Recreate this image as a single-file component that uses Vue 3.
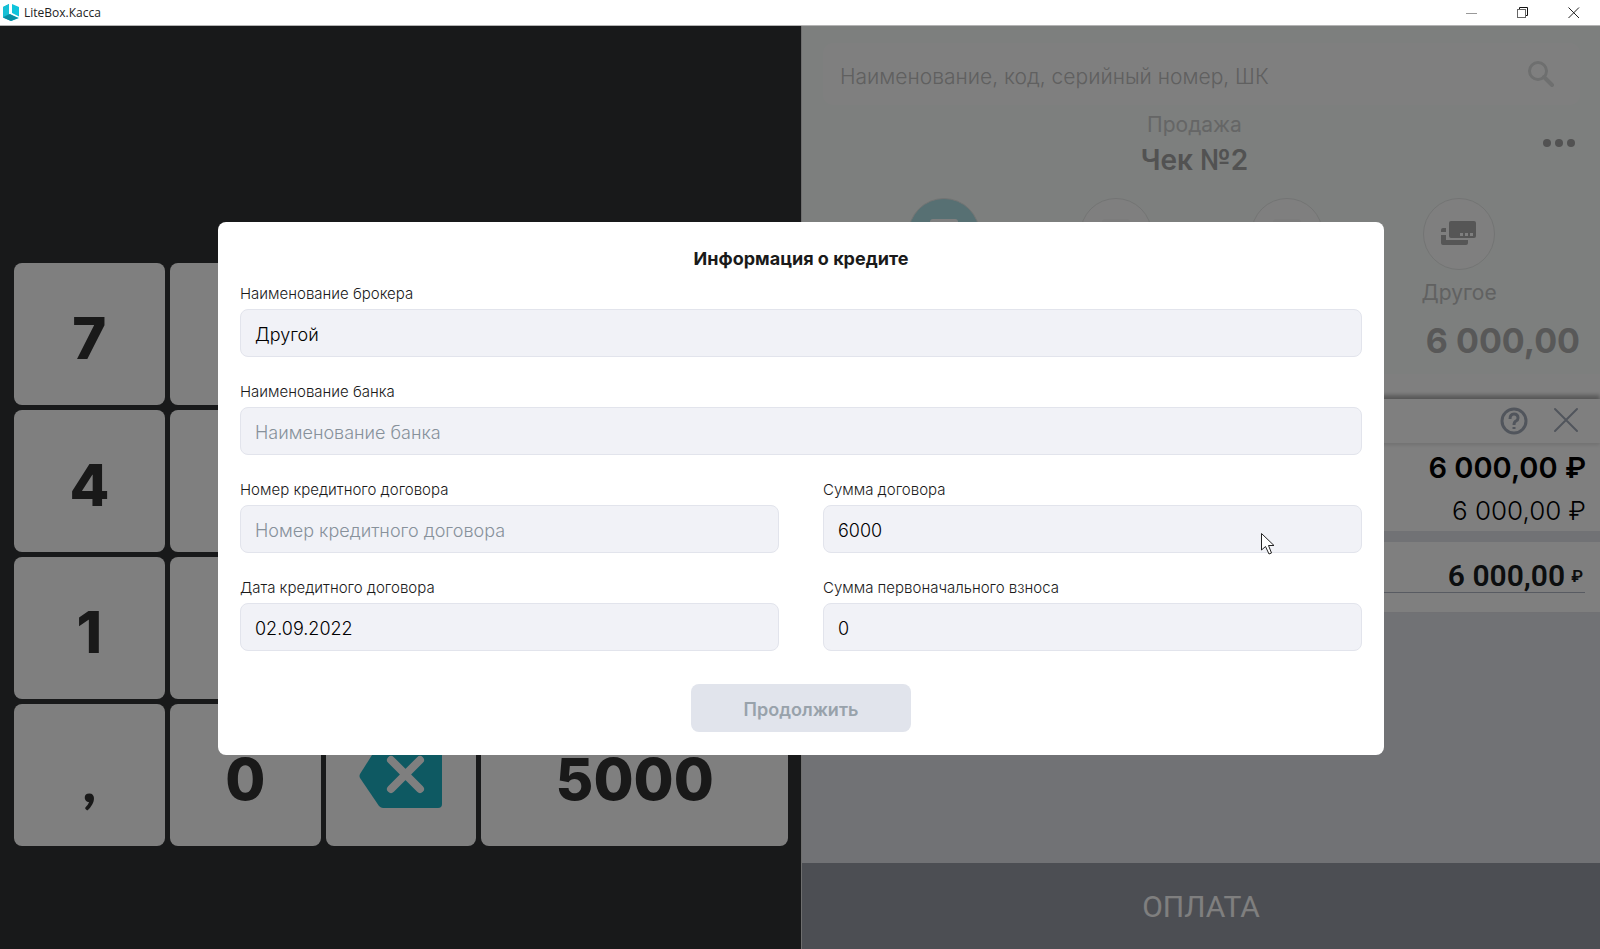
<template>
  <div class="window">
    <header class="titlebar">
      <svg class="logo" viewBox="0 0 16 17" aria-hidden="true">
        <path d="M0 3 L6 0 V10 L8 11 L16 14 L8 17 L0 13.500 Z" fill="#08aec4" />
        <path d="M0 3 L6 0 V10 L0 13 Z" fill="#16c0d6" />
        <path d="M9 0 L16 3 V12.500 L9 9 Z" fill="#10c4dc" />
        <path d="M0 13.500 L7 10 L15 14 L8 17 Z" fill="#0a8ea4" />
      </svg>
      <span class="app-name">LiteBox.Касса</span>
      <div class="window-buttons">
        <button type="button" aria-label="Свернуть">
          <svg viewBox="0 0 12 12"><path d="M0 6.500 H11" stroke="#999" /></svg>
        </button>
        <button type="button" aria-label="Развернуть">
          <svg viewBox="0 0 12 12" fill="none">
            <path d="M2.500 2.500 V0.500 H10.500 V8.500 H8.500" stroke="#111" />
            <rect x="0.500" y="2.500" width="8" height="8" stroke="#666" />
          </svg>
        </button>
        <button type="button" aria-label="Закрыть">
          <svg viewBox="0 0 12 12"><path d="M0.500 0.500 L11 11 M11 0.500 L0.500 11" stroke="#222" /></svg>
        </button>
      </div>
    </header>

    <main class="workspace">
      <section class="keypad-side">
        <div class="keypad">
          <button
            v-for="(key, index) in keys"
            :key="index"
            type="button"
            class="key"
            :class="{ wide: key.wide, comma: key.label === ',' }"
          >
            <svg v-if="key.erase" class="erase" viewBox="0 0 84 66" role="img" aria-label="Стереть">
              <path d="M24 0 H79 Q83 0 83 4 V62 Q83 66 79 66 H24 Q22 66 20 64 L1 36 Q0 34 1 32 L20 2 Q22 0 24 0 Z" fill="#1cb2c5" />
              <path d="M32 18 L61 47 M61 18 L32 47" stroke="#fff" stroke-width="8" stroke-linecap="round" />
            </svg>
            <span v-else>{{ key.label }}</span>
          </button>
        </div>
      </section>

      <section class="receipt-side">
        <div class="receipt-top">
          <div class="search">
            <input type="text" aria-label="Поиск товара" placeholder="Наименование, код, серийный номер, ШК" />
            <svg viewBox="0 0 26 26" fill="none" stroke="#dcdede" stroke-width="3">
              <circle cx="10" cy="10" r="8.500" />
              <path d="M16 16 L24 24" stroke-width="4" stroke-linecap="round" />
            </svg>
          </div>

          <div class="receipt-head">
            <div class="receipt-title">
              <p>Продажа</p>
              <h1>Чек №2</h1>
            </div>
            <button type="button" class="more" aria-label="Ещё">
              <i></i><i></i><i></i>
            </button>
          </div>

          <div class="methods">
            <button v-for="method in methods" :key="method.id" type="button" class="method">
              <span class="circle" :class="{ active: method.active }">
                <svg v-if="method.id === 'other'" viewBox="0 0 36 26" fill="#acacac">
                  <path d="M10 0 H33 Q35 0 35 2 V15 Q35 17 33 17 H10 Q8 17 8 15 V2 Q8 0 10 0 Z" />
                  <path d="M2 7 H5 V11 H0 V9 Q0 7 2 7 Z M0 14 H5 V19 H27 V22 Q27 24 25 24 H2 Q0 24 0 22 Z" />
                  <path d="M19 12 h3 v3 h-3 Z M24 12 h3 v3 h-3 Z M29 12 h3 v3 h-3 Z" fill="#fff" />
                </svg>
                <svg v-else viewBox="0 0 28 30">
                  <rect width="28" height="30" rx="3" :fill="method.active ? '#fff' : '#f8f8f8'" />
                </svg>
              </span>
              <span>{{ method.name }}</span>
            </button>
          </div>
          <p class="receipt-sum">6 000,00</p>
        </div>

        <div class="payment">
          <div class="payment-bar">
            <button type="button" aria-label="Справка">
              <svg viewBox="0 0 28 28" fill="none" stroke="#a2abb9" stroke-width="3">
                <circle cx="14" cy="14" r="12" />
                <path d="M10 12 Q10 7 14 7 Q18 7 18 11 Q18 13 16 14 Q14 15 14 18 M14 20 V22" />
              </svg>
            </button>
            <button type="button" aria-label="Закрыть оплату">
              <svg viewBox="0 0 28 28" stroke="#a2abb9" stroke-width="2" stroke-linecap="round">
                <path d="M3 2 L25 24 M25 2 L3 24" />
              </svg>
            </button>
          </div>
          <div class="totals">
            <p class="total">6 000,00 ₽</p>
            <p class="subtotal">6 000,00 ₽</p>
          </div>
          <div class="paid">
            <p>6 000,00<small>₽</small></p>
          </div>
        </div>

        <button type="button" class="pay">ОПЛАТА</button>
      </section>

      <div class="overlay">
        <form class="dialog" @submit.prevent>
          <h2>Информация о кредите</h2>
          <div class="fields">
            <div v-for="field in fields" :key="field.id" class="field" :class="{ full: field.full }">
              <label :for="field.id">{{ field.label }}</label>
              <input :id="field.id" v-model="field.value" type="text" :placeholder="field.placeholder" />
            </div>
          </div>
          <button type="submit" class="submit" disabled>Продолжить</button>
        </form>
        <svg class="pointer" viewBox="0 0 14 22">
          <path d="M0.500 0.500 V17 L4.500 13.500 L8 21 L10.500 20 L7.500 12.500 H13 Z" fill="#fff" stroke="#222" />
        </svg>
      </div>
    </main>
  </div>
</template>

<script setup>
import { ref } from 'vue';

const keys = [
  { label: '7' },
  {},
  {},
  { wide: true },
  { label: '4' },
  {},
  {},
  { wide: true },
  { label: '1' },
  {},
  {},
  { wide: true },
  { label: ',' },
  { label: '0' },
  { erase: true },
  { label: '5000', wide: true },
];

const methods = [
  { id: 'cash', active: true },
  { id: 'card' },
  { id: 'credit' },
  { id: 'other', name: 'Другое' },
];

const fields = ref([
  { id: 'broker', label: 'Наименование брокера', value: 'Другой', full: true },
  { id: 'bank', label: 'Наименование банка', value: '', placeholder: 'Наименование банка', full: true },
  { id: 'number', label: 'Номер кредитного договора', value: '', placeholder: 'Номер кредитного договора' },
  { id: 'amount', label: 'Сумма договора', value: '6000' },
  { id: 'date', label: 'Дата кредитного договора', value: '02.09.2022' },
  { id: 'deposit', label: 'Сумма первоначального взноса', value: '0' },
]);
</script>

<style>
body {
  margin: 0;
}
</style>

<style scoped>
* {
  box-sizing: border-box;
}

p,
h1,
h2 {
  margin: 0;
}

button,
input {
  font-family: inherit;
  border: none;
  padding: 0;
}

button {
  background: none;
}

.window {
  display: flex;
  flex-direction: column;
  min-height: 100vh;
  font-family: Inter, 'Liberation Sans', sans-serif;
  color: #1a1a1a;
}

.titlebar {
  display: flex;
  align-items: center;
  height: 26px;
  padding: 0 1px 0 3px;
  background: #fff;
  border-bottom: 1px solid #b4b4b4;
}

.logo {
  width: 16px;
  height: 17px;
}

.app-name {
  margin-left: 5px;
  font: 12px 'Open Sans', sans-serif;
  color: #222;
}

.window-buttons {
  display: flex;
  margin-left: auto;
}

.window-buttons button {
  display: flex;
  align-items: center;
  justify-content: center;
  width: 51px;
  height: 25px;
}

.window-buttons svg {
  width: 12px;
  height: 12px;
}

.workspace {
  position: relative;
  display: grid;
  flex: 1;
  grid-template-columns: minmax(0, 1fr) minmax(0, 1fr);
  background: #303234;
}

.keypad-side {
  display: flex;
  flex-direction: column;
  justify-content: flex-end;
  padding: 0 12px 103px 14px;
}

.keypad {
  display: grid;
  grid-template-columns: repeat(5, 1fr);
  grid-auto-rows: 142px;
  gap: 5px;
}

.key {
  display: flex;
  align-items: center;
  justify-content: center;
  border-radius: 8px;
  background: #fff;
  font-size: 58px;
  font-weight: 800;
  color: #333;
}

.key span {
  padding-top: 8px;
}

.key.wide {
  grid-column: span 2;
}

.key.comma {
  font-family: Lato, sans-serif;
  font-weight: 900;
}

.erase {
  width: 84px;
  height: 66px;
}

.receipt-side {
  display: flex;
  flex-direction: column;
  margin-left: 1px;
  border-left: 1px solid #dcdcdc;
  background: #e3e4ea;
}

.receipt-top {
  height: 348px;
  padding: 17px 20px 0 21px;
  background: #fafffc;
}

.search {
  display: flex;
  align-items: center;
  height: 62px;
  padding: 0 26px 0 17px;
  border-radius: 10px;
  background: #fff;
}

.search input {
  flex: 1;
  padding-top: 4px;
  background: none;
  font-size: 21px;
  font-weight: 300;
}

.search input::placeholder {
  color: #c0c0c0;
  opacity: 1;
}

.search svg {
  width: 26px;
  height: 26px;
}

.receipt-head {
  display: grid;
  grid-template-columns: 30px 1fr 44px;
  align-items: center;
  height: 76px;
}

.receipt-title {
  grid-column: 2;
  padding-top: 2px;
  text-align: center;
}

.receipt-title p {
  font-size: 21px;
  line-height: 32px;
  color: #cbcccc;
}

.receipt-title h1 {
  font-size: 28px;
  font-weight: 600;
  line-height: 38px;
  color: #a4a4a4;
}

.more {
  display: flex;
  justify-content: flex-end;
  gap: 4px;
  padding-right: 5px;
}

.more i {
  width: 8px;
  height: 8px;
  border-radius: 50%;
  background: #a4a4a4;
}

.methods {
  display: grid;
  grid-template-columns: repeat(4, 1fr);
  margin-top: 17px;
  padding: 0 35px;
}

.method {
  display: flex;
  flex-direction: column;
  align-items: center;
  gap: 8px;
  font-size: 21px;
  line-height: 30px;
  color: #c2c3c3;
}

.circle {
  display: flex;
  align-items: center;
  justify-content: center;
  width: 72px;
  height: 72px;
  border: 1px solid #e6e8e7;
  border-radius: 50%;
  background: #fff;
}

.circle.active {
  background: #aee0e6;
}

.circle svg {
  width: 36px;
  height: 30px;
}

.receipt-sum {
  margin-top: 11px;
  text-align: right;
  font-size: 34px;
  font-weight: 700;
  line-height: 44px;
  color: #b0b0b0;
}

.payment {
  margin-top: 25px;
  background: #fff;
  box-shadow: 0 -4px 4px rgba(0, 0, 0, 0.3), 0 -25px 0 #fff;
}

.payment-bar {
  display: flex;
  align-items: center;
  justify-content: flex-end;
  gap: 24px;
  height: 44px;
  padding-right: 20px;
  box-shadow: 0 2px 4px rgba(0, 0, 0, 0.12);
}

.payment-bar svg {
  display: block;
  width: 28px;
  height: 28px;
}

.totals {
  height: 88px;
  padding: 3px 14px 0;
  text-align: right;
  color: #000;
}

.total {
  font-size: 29px;
  font-weight: 600;
  line-height: 43px;
}

.subtotal {
  font-size: 26px;
  font-weight: 300;
  line-height: 43px;
}

.paid {
  height: 81px;
  padding: 22px 15px 0;
  border-top: 11px solid #e3e4ea;
}

.paid p {
  display: flex;
  align-items: center;
  justify-content: flex-end;
  gap: 6px;
  padding: 0 2px 4px 0;
  border-bottom: 1px solid #b0b6c4;
  font: 600 30px/24px Roboto, sans-serif;
  color: #181c20;
}

.paid small {
  font-size: 17px;
}

.pay {
  height: 86px;
  margin-top: auto;
  background: #989ca6;
  font: 30px Roboto, sans-serif;
  color: #fff;
}

.overlay {
  position: absolute;
  inset: 0;
  display: flex;
  align-items: center;
  padding: 2px 216px 0 218px;
  background: rgba(0, 0, 0, 0.5);
}

.dialog {
  display: flex;
  flex: 1;
  flex-direction: column;
  align-items: center;
  padding: 25px 22px 23px;
  border-radius: 8px;
  background: #fff;
}

.dialog h2 {
  font-size: 18px;
  font-weight: 700;
  line-height: 24px;
}

.fields {
  display: grid;
  grid-template-columns: 1fr 1fr;
  gap: 25px 44px;
  width: 100%;
  margin: 13px 0 33px;
}

.field {
  display: flex;
  flex-direction: column;
  gap: 5px;
}

.field.full {
  grid-column: span 2;
}

.field label {
  font-size: 15px;
  font-weight: 300;
  line-height: 20px;
}

.field input {
  width: 100%;
  height: 48px;
  padding: 2px 14px 0;
  border: 1px solid #e2e4ec;
  border-radius: 8px;
  background: #f1f2f7;
  font-size: 18px;
  font-weight: 300;
  color: #000;
}

.field input::placeholder {
  color: #87919b;
  opacity: 1;
}

.submit {
  width: 220px;
  height: 48px;
  padding-top: 2px;
  border-radius: 8px;
  background: #e1e4ec;
  font-size: 18px;
  font-weight: 600;
  color: #98a2ab;
}

.pointer {
  position: absolute;
  top: 507px;
  left: 1261px;
  width: 14px;
  height: 22px;
}
</style>
